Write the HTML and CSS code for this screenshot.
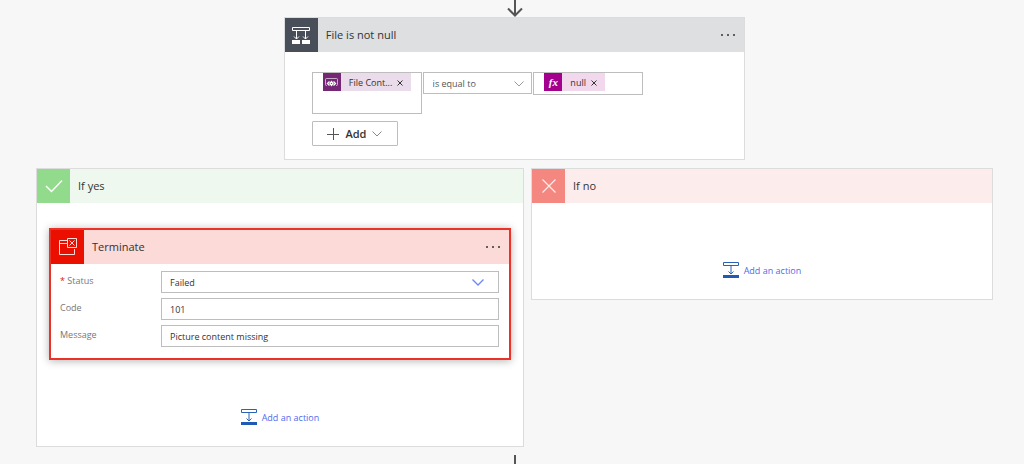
FILE: index.html
```html
<!DOCTYPE html>
<html lang="en">
<head>
<meta charset="utf-8">
<title>Flow condition</title>
<link rel="stylesheet" href="styles.css">
</head>
<body>
<main class="flow">
  <svg class="arrow-in" width="18" height="17" viewBox="0 0 18 17" fill="none" stroke="#555" stroke-width="2" aria-hidden="true"><path d="M9 0v15"/><path d="M2 8.500l7 7 7-7"/></svg>

  <section class="card condition">
    <header class="card-head condition-head">
      <span class="tile tile-slate">
        <svg width="20" height="20" viewBox="0 0 20 20" fill="none" stroke="#fff" aria-hidden="true"><path d="M1.500 2.500h17v3h-17z"/><path d="M5.500 6v8M14.500 6v8M3 11.500l2.500 2.500 2.500-2.500M12 11.500l2.500 2.500 2.500-2.500"/><path fill="#fff" stroke="none" d="M1 15h8v4H1zM11 15h8v4h-8z"/></svg>
      </span>
      <h2 class="title">File is not null</h2>
      <button class="more" aria-label="Condition menu"><svg width="16" height="4" viewBox="0 0 16 4" fill="#333" aria-hidden="true"><circle cx="2" cy="2" r="1"/><circle cx="8" cy="2" r="1"/><circle cx="14" cy="2" r="1"/></svg></button>
    </header>
    <div class="condition-body">
      <div class="expression">
        <div class="token-box token-box-tall">
          <span class="token token-purple">
            <span class="token-icon"><svg width="13" height="11" viewBox="0 0 13 11" fill="none" stroke="#fff" aria-hidden="true"><path stroke-opacity=".6" d="M2 8.500H1.500a1 1 0 0 1-1-1v-5a1 1 0 0 1 1-1h10a1 1 0 0 1 1 1v5a1 1 0 0 1-1 1H11"/><path stroke-width="1.300" d="M4.500 4.500l-2 2 2 2M8.500 4.500l2 2-2 2M5 6.500l1.500-2 1.500 2-1.500 2z"/></svg></span>
            <span class="token-text">File Cont...</span>
            <button class="token-remove" aria-label="Remove File Content"><svg width="6" height="6" viewBox="0 0 6 6" stroke="#333" aria-hidden="true"><path d="M.5.5l5 5M5.500.5l-5 5"/></svg></button>
          </span>
        </div>
        <div class="select-wrap">
          <select class="field operator" aria-label="Operator"><option>is equal to</option></select>
          <svg class="chevron" width="10" height="6" viewBox="0 0 10 6" fill="none" stroke="#999" aria-hidden="true"><path d="M.5.5L5 5 9.500.5"/></svg>
        </div>
        <div class="token-box">
          <span class="token token-pink">
            <span class="token-icon token-fx">fx</span>
            <span class="token-text">null</span>
            <button class="token-remove" aria-label="Remove null"><svg width="6" height="6" viewBox="0 0 6 6" stroke="#333" aria-hidden="true"><path d="M.5.5l5 5M5.500.5l-5 5"/></svg></button>
          </span>
        </div>
      </div>
      <button class="add">
        <svg width="12" height="12" viewBox="0 0 12 12" stroke="#555" aria-hidden="true"><path d="M0 6.500h12M6.500 0v12"/></svg>
        <span>Add</span>
        <svg width="10" height="6" viewBox="0 0 10 6" fill="none" stroke="#888" aria-hidden="true"><path d="M.5.5L5 5 9.500.5"/></svg>
      </button>
    </div>
  </section>

  <div class="branches">
    <section class="card">
      <header class="card-head yes-head">
        <span class="tile tile-green"><svg width="18" height="14" viewBox="0 0 18 14" fill="none" stroke="#fff" stroke-width="1.500" aria-hidden="true"><path d="M1 7l5.500 5.500L17 1.500"/></svg></span>
        <h2 class="title">If yes</h2>
      </header>
      <div class="branch-body">
        <section class="terminate">
          <header class="card-head terminate-head">
            <span class="tile tile-red"><svg width="20" height="20" viewBox="0 0 20 20" fill="none" stroke="#fff" stroke-opacity=".85" aria-hidden="true"><path d="M9 3.500H1.500v14h15V12M1.500 6.500H9M9.500 1.500h9v9h-9zM11.500 3.500l5 5M16.500 3.500l-5 5"/></svg></span>
            <h2 class="title">Terminate</h2>
            <button class="more" aria-label="Terminate menu"><svg width="16" height="4" viewBox="0 0 16 4" fill="#333" aria-hidden="true"><circle cx="2" cy="2" r="1"/><circle cx="8" cy="2" r="1"/><circle cx="14" cy="2" r="1"/></svg></button>
          </header>
          <form class="form">
            <label for="status"><span class="required">*</span> Status</label>
            <div class="select-wrap">
              <select class="field" id="status"><option>Failed</option></select>
              <svg class="chevron chevron-blue" width="12" height="7" viewBox="0 0 12 7" fill="none" stroke="#6b86f5" stroke-width="1.300" aria-hidden="true"><path d="M.5.5L6 6 11.500.5"/></svg>
            </div>
            <label for="code">Code</label>
            <input class="field" id="code" type="text" value="101">
            <label for="message">Message</label>
            <input class="field" id="message" type="text" value="Picture content missing">
          </form>
        </section>
        <button class="add-action">
          <svg width="16" height="16" viewBox="0 0 16 16" fill="none" stroke="#2b62b5" aria-hidden="true"><path d="M.5.5h15v3H.5zM8 4v8M5.500 9.500L8 12l2.500-2.500"/><path fill="#1f5bb5" stroke="none" d="M0 13h16v3H0z"/></svg>
          <span>Add an action</span>
        </button>
      </div>
    </section>

    <section class="card">
      <header class="card-head no-head">
        <span class="tile tile-coral"><svg width="14" height="14" viewBox="0 0 14 14" stroke="#fff" stroke-opacity=".85" stroke-width="1.200" aria-hidden="true"><path d="M.5.5l13 13M13.500.5l-13 13"/></svg></span>
        <h2 class="title">If no</h2>
      </header>
      <div class="branch-body">
        <button class="add-action">
          <svg width="16" height="16" viewBox="0 0 16 16" fill="none" stroke="#2b62b5" aria-hidden="true"><path d="M.5.5h15v3H.5zM8 4v8M5.500 9.500L8 12l2.500-2.500"/><path fill="#1f5bb5" stroke="none" d="M0 13h16v3H0z"/></svg>
          <span>Add an action</span>
        </button>
      </div>
    </section>
  </div>
  <span class="line-out"></span>
</main>
</body>
</html>
```
FILE: styles.css
```css
* { box-sizing: border-box; }

body {
  margin: 0;
  background: #f7f7f7;
  color: #333;
  font-family: "Open Sans", "Noto Sans", sans-serif;
  font-size: 9px;
}

button {
  margin: 0;
  padding: 0;
  border: 0;
  background: none;
  color: inherit;
  font: inherit;
}

svg { display: block; flex: none; }

.flow {
  display: flex;
  flex-direction: column;
  align-items: center;
  padding: 0 31px 0 36px;
}

.card {
  background: #fff;
  border: 1px solid #dcdcdc;
}

.condition { width: 48.2%; }

.card-head {
  display: flex;
  align-items: center;
  height: 34px;
}

.condition-head { background: #dddfe1; }
.yes-head { background: #eef8ee; }
.no-head { background: #fdecec; }
.terminate-head { background: #fcdad8; }

.tile {
  display: flex;
  align-items: center;
  justify-content: center;
  width: 33px;
  height: 34px;
}

.tile-slate { background: #484f58; }
.tile-green { background: #92da8c; }
.tile-coral { background: #f4877f; }
.tile-red { background: #eb0f00; }

.title {
  flex: 1;
  margin: 0;
  padding-left: 8px;
  font-size: 11px;
  line-height: 16px;
  font-weight: 400;
}

.more { padding: 8px; }

.condition-body { padding: 20px 101px 13px 27px; }

.expression {
  display: grid;
  grid-template-columns: repeat(3, 1fr);
  gap: 1px;
  align-items: start;
}

.token-box {
  height: 23px;
  padding-left: 10px;
  background: #fff;
  border: 1px solid #bdbdbd;
}

.token-box-tall { height: 42px; }

.token {
  display: inline-flex;
  align-items: center;
  height: 18px;
  padding-right: 8px;
  vertical-align: top;
}

.token-purple { background: #eadcea; }
.token-pink { background: #f2d8ed; }

.token-icon {
  display: flex;
  align-items: center;
  justify-content: center;
  width: 18px;
  height: 18px;
  margin-right: 8px;
  background: #742774;
}

.token-fx {
  background: #a4008e;
  color: #fff;
  font: italic 700 11px "Liberation Serif", serif;
}

.token-text { white-space: nowrap; }

.token-remove { padding: 2px 0 0 5px; }

.select-wrap { position: relative; }

.field {
  display: block;
  width: 100%;
  height: 22px;
  margin: 0;
  padding: 0 8px;
  appearance: none;
  background: #fff;
  border: 1px solid #bdbdbd;
  border-radius: 0;
  color: #333;
  font: inherit;
}

.operator { padding-left: 9px; color: #555; }

.chevron {
  position: absolute;
  top: 9px;
  right: 8px;
  pointer-events: none;
}

.chevron-blue { top: 8px; right: 15px; }

.add {
  display: flex;
  align-items: center;
  justify-content: center;
  gap: 6px;
  width: 86px;
  height: 25px;
  margin-top: 7px;
  border: 1px solid #bdbdbd;
  border-radius: 1px;
  font-size: 11px;
  font-weight: 600;
}

.branches {
  display: grid;
  grid-template-columns: 488fr 462fr;
  gap: 7px;
  align-items: start;
  width: 100%;
  margin-top: 8px;
}

.branch-body {
  display: flex;
  flex-direction: column;
  align-items: center;
  padding: 25px 12px 21px;
}

.terminate {
  width: 100%;
  margin-bottom: 49px;
  background: #fff;
  border: 2px solid #eb3229;
  box-shadow: 0 1px 8px rgba(0, 0, 0, 0.3);
}

.form {
  display: grid;
  grid-template-columns: 93px 1fr;
  column-gap: 8px;
  row-gap: 5px;
  padding: 7px 10px 11px 9px;
}

.form label {
  color: #777;
  line-height: 20px;
}

.required { color: #e00b1c; }

.add-action {
  display: flex;
  align-items: center;
  gap: 5px;
  color: #4f6bed;
}

.no-head + .branch-body { padding-top: 59px; }

.line-out {
  width: 2px;
  height: 9px;
  margin-top: 8px;
  background: #555;
}
```
